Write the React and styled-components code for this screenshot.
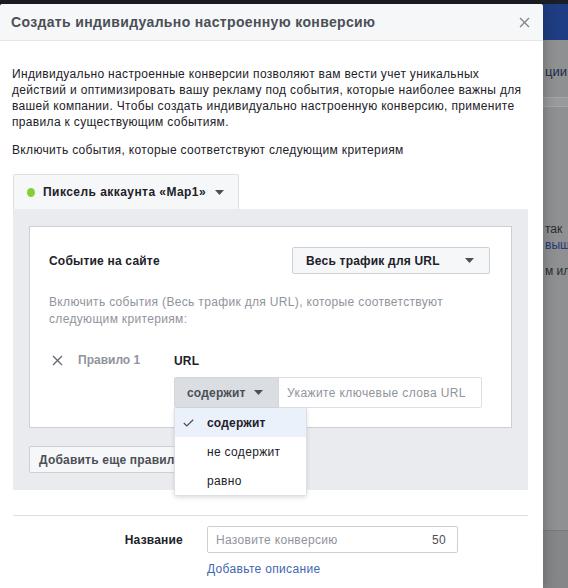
import React from "react";
import styled, { createGlobalStyle } from "styled-components";

const GlobalStyle = createGlobalStyle`
  html, body {
    margin: 0;
    padding: 0;
  }
  body {
    font-family: "Liberation Sans", Arial, sans-serif;
    font-size: 12px;
    letter-spacing: 0.33px;
    color: #1d2129;
  }
  * {
    box-sizing: border-box;
  }
`;

const Caret = () => (
  <svg width="9" height="5" viewBox="0 0 9 5">
    <path d="M0 0h9L4.5 5z" fill="#4b4f56" />
  </svg>
);

const CrossIcon = ({ size = 11, color = "#606770" }) => (
  <svg width={size} height={size} viewBox="0 0 11 11">
    <path d="M1 1l9 9M10 1l-9 9" stroke={color} strokeWidth="1.3" fill="none" />
  </svg>
);

const CheckIcon = () => (
  <svg width="11" height="8" viewBox="0 0 11 8">
    <path d="M0.8 4l3 3L10.2 0.8" stroke="#4b4f56" strokeWidth="1.2" fill="none" />
  </svg>
);

const options = ["содержит", "не содержит", "равно"];

const App = () => {
  return (
    <>
      <GlobalStyle />
      <Stage>
        <Backdrop>
          <TopStrip />
          <BlueBar />
          <BgBody>
            <BgLine $top={24} $size={13} $color="#1c2a48">
              ции
            </BgLine>
            <BgStrip />
            <BgLine $top={114} $color="#2b2d31">
              так
            </BgLine>
            <BgLine $top={0} $color="#203a72">
              выш
            </BgLine>
            <BgLine $top={10} $color="#2b2d31">
              м ил
            </BgLine>
            <BgFooter />
          </BgBody>
        </Backdrop>

        <Modal>
          <Header>
            <Title>Создать индивидуально настроенную конверсию</Title>
            <CrossIcon size={11} color="#7f838a" />
          </Header>
          <Body>
            <Intro>
              Индивидуально настроенные конверсии позволяют вам вести учет уникальных
              <br />
              действий и оптимизировать вашу рекламу под события, которые наиболее важны для
              <br />
              вашей компании. Чтобы создать индивидуально настроенную конверсию, примените
              <br />
              правила к существующим событиям.
            </Intro>
            <Criteria>Включить события, которые соответствуют следующим критериям</Criteria>

            <Section>
              <PixelTab>
                <Dot />
                <TabText>Пиксель аккаунта «Map1»</TabText>
                <Caret />
              </PixelTab>
              <Panel>
                <Card>
                  <EventRow>
                    <Strong>Событие на сайте</Strong>
                    <SelectButton>
                      <Strong>Весь трафик для URL</Strong>
                      <Caret />
                    </SelectButton>
                  </EventRow>
                  <Hint>
                    Включить события (Весь трафик для URL), которые соответствуют
                    <br />
                    следующим критериям:
                  </Hint>
                  <RuleRow>
                    <RuleHead>
                      <CrossIcon />
                      <RuleLabel>Правило 1</RuleLabel>
                    </RuleHead>
                    <RuleBody>
                      <UrlLabel>URL</UrlLabel>
                      <Condition>
                        <OpSelect>
                          <span>содержит</span>
                          <Caret />
                        </OpSelect>
                        <UrlInput placeholder="Укажите ключевые слова URL" />
                        <Menu>
                          {options.map((o, i) => (
                            <MenuItem key={o} $active={i === 0}>
                              <CheckSlot>{i === 0 && <CheckIcon />}</CheckSlot>
                              {o}
                            </MenuItem>
                          ))}
                        </Menu>
                      </Condition>
                    </RuleBody>
                  </RuleRow>
                </Card>
                <AddRule>Добавить еще правило</AddRule>
              </Panel>
            </Section>

            <Divider />
            <NameRow>
              <NameLabel>Название</NameLabel>
              <NameField>
                <span>Назовите конверсию</span>
                <Counter>50</Counter>
              </NameField>
              <span />
              <Link>Добавьте описание</Link>
            </NameRow>
          </Body>
        </Modal>
      </Stage>
    </>
  );
};

export default App;

const Stage = styled.div`
  position: relative;
  width: 568px;
  height: 588px;
  overflow: hidden;
  background: #8f9092;
`;

const Backdrop = styled.div`
  display: flex;
  flex-direction: column;
  height: 100%;
`;

const TopStrip = styled.div`
  height: 4px;
  background: #1b1e25;
`;

const BlueBar = styled.div`
  height: 36px;
  background: #1f3d82;
`;

const BgBody = styled.div`
  flex: 1;
  display: flex;
  flex-direction: column;
  padding-left: 545px;
  white-space: nowrap;
  letter-spacing: 0;
`;

const BgLine = styled.div`
  margin-top: ${(p) => p.$top}px;
  font-size: ${(p) => p.$size || 12}px;
  line-height: 16px;
  color: ${(p) => p.$color};
`;

const BgStrip = styled.div`
  height: 10px;
  margin: 17px 0 0 -10px;
  background: #999a9c;
  border-top: 1px solid #a3a4a6;
  border-bottom: 1px solid #a3a4a6;
`;

const BgFooter = styled.div`
  margin: auto 0 0 -10px;
  height: 58px;
  background: #858688;
  border-top: 1px solid #797a7c;
`;

const Modal = styled.div`
  position: absolute;
  top: 4px;
  left: 0;
  bottom: 0;
  width: 543px;
  background: #fff;
  border-radius: 3px 3px 0 0;
  box-shadow: 0 2px 14px rgba(0, 0, 0, 0.28);
  display: flex;
  flex-direction: column;
`;

const Header = styled.div`
  height: 37px;
  display: flex;
  align-items: center;
  justify-content: space-between;
  padding: 0 13px 0 11px;
  background: #f6f7f9;
  border-bottom: 1px solid #e5e5e5;
  border-radius: 3px 3px 0 0;
`;

const Title = styled.div`
  font-size: 14px;
  font-weight: bold;
  letter-spacing: 0.35px;
  color: #4b4f56;
`;

const Body = styled.div`
  padding: 25px 15px 0 12px;
  display: flex;
  flex-direction: column;
`;

const Intro = styled.p`
  margin: 0;
  line-height: 16px;
  white-space: nowrap;
  color: #1d2129;
`;

const Criteria = styled.p`
  margin: 12px 0 0;
  line-height: 16px;
`;

const Section = styled.div`
  margin: 16px 0 0 1px;
  display: flex;
  flex-direction: column;
`;

const PixelTab = styled.div`
  align-self: flex-start;
  height: 35px;
  display: flex;
  align-items: center;
  padding: 0 14px 0 13px;
  background: #f6f7f9;
  border: 1px solid #dddfe2;
  border-bottom: none;
  border-radius: 2px 2px 0 0;
`;

const Dot = styled.span`
  width: 8px;
  height: 9px;
  border-radius: 50%;
  background: #7fd13b;
`;

const TabText = styled.span`
  margin: 0 9px 0 8px;
  font-weight: bold;
  letter-spacing: 0.45px;
  color: #1d2129;
`;

const Panel = styled.div`
  background: #e9ebee;
  padding: 17px 16px 17px 16px;
  display: flex;
  flex-direction: column;
`;

const Card = styled.div`
  background: #fff;
  border: 1px solid #ccd0d5;
  padding: 20px 21px 19px 19px;
`;

const EventRow = styled.div`
  display: flex;
  align-items: center;
  justify-content: space-between;
`;

const Strong = styled.span`
  font-weight: bold;
  letter-spacing: 0.2px;
  color: #1d2129;
`;

const SelectButton = styled.div`
  width: 198px;
  height: 27px;
  display: flex;
  align-items: center;
  justify-content: space-between;
  padding: 0 15px 0 13px;
  background: #f6f7f9;
  border: 1px solid #ccd0d5;
  border-radius: 2px;
`;

const Hint = styled.p`
  margin: 20px 0 0;
  line-height: 17px;
  color: #90949c;
`;

const RuleRow = styled.div`
  margin-top: 22px;
  display: flex;
  align-items: flex-start;
`;

const RuleHead = styled.div`
  width: 125px;
  display: flex;
  align-items: center;
  padding: 2px 0 0 3px;
`;

const RuleLabel = styled.span`
  margin-left: 15px;
  font-weight: bold;
  letter-spacing: 0;
  color: #90949c;
  line-height: 16px;
`;

const RuleBody = styled.div`
  display: flex;
  flex-direction: column;
`;

const UrlLabel = styled.div`
  margin-top: 3px;
  line-height: 16px;
  font-weight: bold;
  letter-spacing: 0.2px;
  color: #1d2129;
`;

const Condition = styled.div`
  position: relative;
  margin-top: 8px;
  display: flex;
`;

const OpSelect = styled.div`
  width: 105px;
  height: 31px;
  display: flex;
  align-items: center;
  gap: 8px;
  padding-left: 12px;
  background: #dadde1;
  border: 1px solid #d3d6db;
  border-radius: 2px 0 0 2px;
  font-weight: bold;
  letter-spacing: 0.2px;
  color: #4b4f56;
`;

const UrlInput = styled.input`
  width: 203px;
  height: 31px;
  padding: 0 8px;
  border: 1px solid #dddfe2;
  border-left: none;
  border-radius: 0 2px 2px 0;
  font-family: inherit;
  font-size: 12px;
  letter-spacing: 0.4px;
  outline: none;
  &::placeholder {
    color: #90949c;
  }
`;

const Menu = styled.div`
  position: absolute;
  top: 31px;
  left: 0;
  z-index: 2;
  width: 133px;
  background: #fff;
  border: 1px solid #dddfe2;
  border-top: none;
  border-radius: 0 0 3px 3px;
  box-shadow: 0 2px 4px rgba(0, 0, 0, 0.12);
`;

const MenuItem = styled.div`
  height: 29px;
  display: flex;
  align-items: center;
  padding-left: 8px;
  background: ${(p) => (p.$active ? "#ebf1fb" : "#fff")};
  font-weight: ${(p) => (p.$active ? "bold" : "normal")};
  letter-spacing: ${(p) => (p.$active ? "0.2px" : "0.33px")};
  color: #1d2129;
`;

const CheckSlot = styled.span`
  width: 24px;
  display: flex;
  align-items: center;
`;

const AddRule = styled.div`
  align-self: flex-start;
  margin-top: 18px;
  height: 27px;
  display: flex;
  align-items: center;
  padding: 0 9px;
  background: #f6f7f9;
  border: 1px solid #ccd0d5;
  border-radius: 2px;
  font-weight: bold;
  letter-spacing: 0.2px;
  color: #4b4f56;
`;

const Divider = styled.div`
  margin: 25px 0 0 1px;
  border-top: 1px solid #dddfe2;
`;

const NameRow = styled.div`
  margin-top: 10px;
  display: grid;
  grid-template-columns: 171px 251px;
  column-gap: 24px;
  row-gap: 8px;
  align-items: center;
`;

const NameLabel = styled.div`
  text-align: right;
  font-weight: bold;
  letter-spacing: 0.2px;
  color: #1d2129;
`;

const NameField = styled.div`
  height: 27px;
  display: flex;
  align-items: center;
  justify-content: space-between;
  padding: 0 11px 0 8px;
  border: 1px solid #ccd0d5;
  border-radius: 2px;
  color: #90949c;
`;

const Counter = styled.span`
  color: #4b4f56;
`;

const Link = styled.div`
  line-height: 16px;
  color: #4267b2;
`;
